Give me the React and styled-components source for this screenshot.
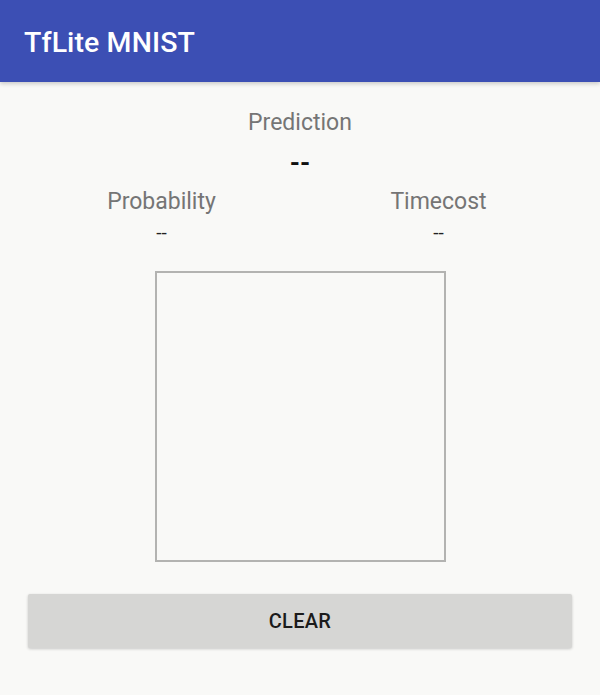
import React from 'react';
import styled, { createGlobalStyle } from 'styled-components';

const GlobalStyle = createGlobalStyle`
  html, body {
    margin: 0;
    padding: 0;
    background: #f9f9f7;
    font-family: Roboto, "Noto Sans", sans-serif;
  }
`;

const Screen = styled.div`
  width: 600px;
  height: 695px;
  display: flex;
  flex-direction: column;
  background: #f9f9f7;
  overflow: hidden;
`;

const AppBar = styled.header`
  height: 82px;
  flex-shrink: 0;
  display: flex;
  align-items: center;
  padding: 0 24px;
  box-sizing: border-box;
  background: #3c4fb4;
  box-shadow: 0 2px 4px rgba(0, 0, 0, 0.18);
`;

const Title = styled.h1`
  margin: 2px 0 0;
  color: #fff;
  font-size: 28.5px;
  font-weight: 500;
  letter-spacing: 0.1px;
`;

const Content = styled.main`
  display: flex;
  flex-direction: column;
  align-items: center;
  padding: 26px 0 0;
`;

const Label = styled.div`
  color: #757575;
  font-size: 23px;
  line-height: 30px;
`;

const Value = styled.div`
  color: ${p => (p.$big ? '#111' : '#222')};
  font-size: ${p => (p.$big ? '26px' : '19px')};
  font-weight: ${p => (p.$big ? 700 : 400)};
  line-height: ${p => (p.$big ? '34px' : '24px')};
  margin-top: ${p => (p.$big ? '8px' : '4px')};
`;

const Stats = styled.div`
  width: 100%;
  box-sizing: border-box;
  padding: 7px 23px 0;
  display: grid;
  grid-template-columns: 1fr 1fr;
`;

const Stat = styled.div`
  display: flex;
  flex-direction: column;
  align-items: center;
`;

const Canvas = styled.div`
  width: 291px;
  height: 291px;
  box-sizing: border-box;
  border: 2px solid #b3b3b1;
  background: #f9f9f7;
  margin-top: 26px;
`;

const ClearButton = styled.button`
  width: 544px;
  height: 54px;
  margin-top: 32px;
  border: none;
  border-radius: 2px;
  background: #d6d6d4;
  color: #1b1b1b;
  font-family: Roboto, "Noto Sans", sans-serif;
  font-size: 20px;
  font-weight: 500;
  letter-spacing: 0.3px;
  box-shadow: 0 1px 3px rgba(0, 0, 0, 0.2);
  cursor: pointer;
`;

export default function App() {
  return (
    <Screen>
      <GlobalStyle />
      <AppBar>
        <Title>TfLite MNIST</Title>
      </AppBar>
      <Content>
        <Label>Prediction</Label>
        <Value $big>--</Value>
        <Stats>
          <Stat>
            <Label>Probability</Label>
            <Value>--</Value>
          </Stat>
          <Stat>
            <Label>Timecost</Label>
            <Value>--</Value>
          </Stat>
        </Stats>
        <Canvas />
        <ClearButton>CLEAR</ClearButton>
      </Content>
    </Screen>
  );
}
